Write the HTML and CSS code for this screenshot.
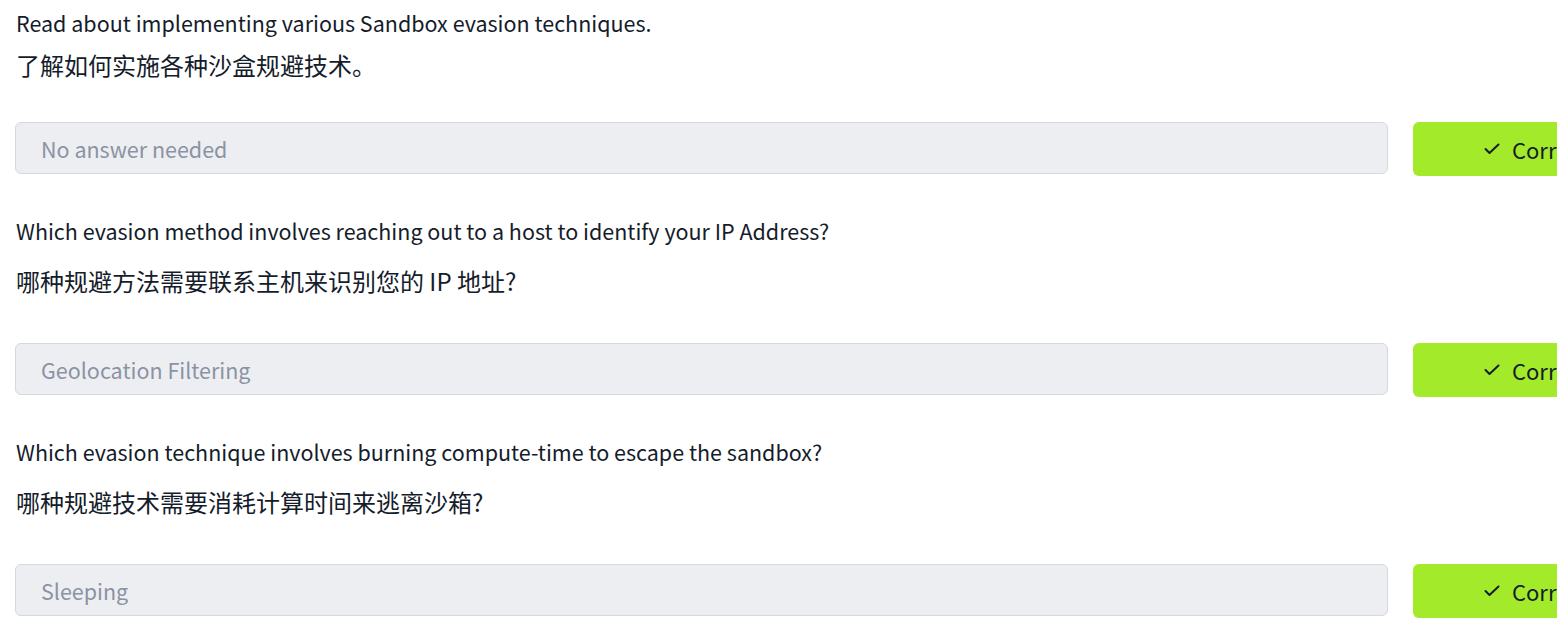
FILE: index.html
```html
<!DOCTYPE html>
<html lang="zh">
<head>
<meta charset="utf-8">
<title>Sandbox Evasion</title>
<link rel="stylesheet" href="styles.css">
</head>
<body>
<div class="page">
  <section class="task task-first">
    <p class="q">Read about implementing various Sandbox evasion techniques.</p>
    <p class="q-zh q-zh-first">了解如何实施各种沙盒规避技术。</p>
    <div class="answer-row">
      <div class="answer">No answer needed</div>
      <button class="btn"><svg class="check" width="16" height="12" viewBox="0 0 16 12"><polyline points="1.5,6 5.5,10 14.5,1.5" fill="none" stroke="#151c2b" stroke-width="2" stroke-linecap="round" stroke-linejoin="round"/></svg><span>Correct Answer</span></button>
    </div>
  </section>
  <section class="task">
    <p class="q">Which evasion method involves reaching out to a host to identify your IP Address?</p>
    <p class="q-zh">哪种规避方法需要联系主机来识别您的 IP 地址?</p>
    <div class="answer-row">
      <div class="answer">Geolocation Filtering</div>
      <button class="btn"><svg class="check" width="16" height="12" viewBox="0 0 16 12"><polyline points="1.5,6 5.5,10 14.5,1.5" fill="none" stroke="#151c2b" stroke-width="2" stroke-linecap="round" stroke-linejoin="round"/></svg><span>Correct Answer</span></button>
    </div>
  </section>
  <section class="task">
    <p class="q">Which evasion technique involves burning compute-time to escape the sandbox?</p>
    <p class="q-zh">哪种规避技术需要消耗计算时间来逃离沙箱?</p>
    <div class="answer-row">
      <div class="answer">Sleeping</div>
      <button class="btn"><svg class="check" width="16" height="12" viewBox="0 0 16 12"><polyline points="1.5,6 5.5,10 14.5,1.5" fill="none" stroke="#151c2b" stroke-width="2" stroke-linecap="round" stroke-linejoin="round"/></svg><span>Correct Answer</span></button>
    </div>
  </section>
</div>
</body>
</html>
```

FILE: styles.css
```css
html, body {
  margin: 0;
  padding: 0;
  overflow: hidden;
  background: #ffffff;
}

body {
  font-family: "Noto Sans CJK SC", "Noto Sans", sans-serif;
  color: #151c2b;
  font-size: 21.5px;
}

.page {
  width: 1700px;
  padding: 6px 0 0 15px;
}

.task {
  display: flex;
  flex-direction: column;
}

.q, .q-zh {
  margin: 0;
  line-height: 34px;
  padding-left: 1px;
}

.q-zh {
  font-size: 24px;
  margin-top: 16px;
}

.task + .task .q {
  margin-top: 38px;
}

.q-zh-first {
  margin-top: 8px;
}

.answer-row {
  display: flex;
  align-items: flex-start;
  gap: 25px;
  margin-top: 45px;
}

.task-first .answer-row {
  margin-top: 40px;
}

.answer {
  flex: none;
  box-sizing: border-box;
  width: 1373px;
  height: 52px;
  border: 1px solid #d5d8de;
  border-radius: 6px;
  background: #edeef2;
  color: #8b93a3;
  padding: 0 25px;
  display: flex;
  align-items: center;
}

.btn {
  flex: none;
  width: 260px;
  height: 54px;
  border: none;
  border-radius: 6px;
  background: #a3ea2a;
  color: #151c2b;
  font: inherit;
  font-size: 22px;
  display: flex;
  align-items: center;
  justify-content: flex-start;
  gap: 12px;
  padding: 0 0 0 71px;
}

.check {
  display: block;
  flex: none;
}
```
